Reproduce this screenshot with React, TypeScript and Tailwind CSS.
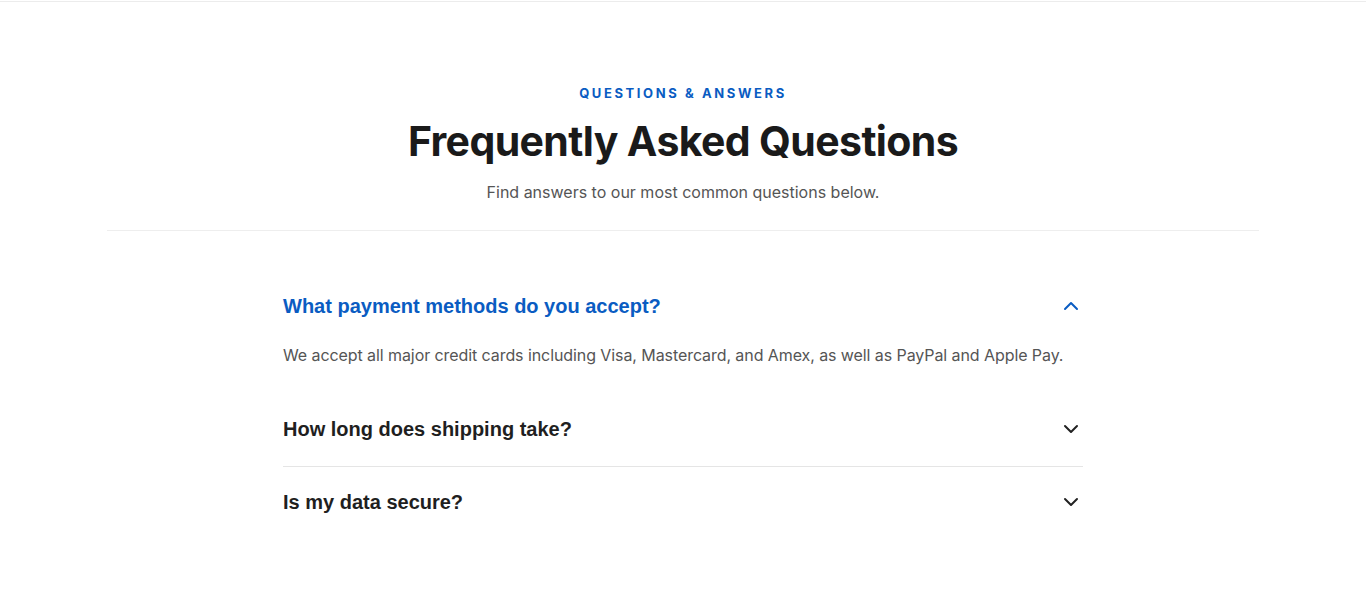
import React, { useState } from "react";
import { ChevronDown, ChevronUp } from "lucide-react";

const faqs = [
  {
    q: "What payment methods do you accept?",
    a: "We accept all major credit cards including Visa, Mastercard, and Amex, as well as PayPal and Apple Pay.",
    pad: "pt-[22px] pb-[22px]",
  },
  { q: "How long does shipping take?", a: "Standard shipping takes 3–5 business days.", pad: "pt-[22px] pb-[23px]" },
  { q: "Is my data secure?", a: "Yes, all data is encrypted in transit and at rest.", pad: "pt-[21px] pb-[22px]" },
];

export default function App() {
  const [open, setOpen] = useState(0);
  return (
    <div className="min-h-[598px] bg-white font-['Inter',sans-serif]">
      <div className="h-[2px] border-b border-[#ececec]" />
      <section className="mx-auto max-w-6xl pt-[81px]">
        <div className="flex flex-col items-center border-b border-[#eeeeee] pb-[26px] text-center">
          <p className="text-[13px] font-bold leading-5 tracking-[0.2em] text-[#0a5cc2]">
            QUESTIONS &amp; ANSWERS
          </p>
          <h1 className="mt-[12px] text-[41px] font-bold leading-[52px] tracking-[-0.015em] text-[#1a1a1a]">
            Frequently Asked Questions
          </h1>
          <p className="mt-[13px] text-base leading-6 text-[#555555]">
            Find answers to our most common questions below.
          </p>
        </div>
        <div className="mx-auto mt-[39px] max-w-[800px]">
          {faqs.map((f, i) => {
            const isOpen = open === i;
            return (
              <div key={i} className={i === 1 ? "border-b border-[#e5e5e5]" : ""}>
                <button
                  onClick={() => setOpen(isOpen ? -1 : i)}
                  className={`flex w-full items-center justify-between text-left ${f.pad}`}
                >
                  <span
                    className={`font-['Liberation_Sans',Arial,sans-serif] text-[20px] font-bold leading-7 ${
                      isOpen ? "text-[#0a5cc2]" : "text-[#1f1f1f]"
                    }`}
                  >
                    {f.q}
                  </span>
                  {isOpen ? (
                    <ChevronUp size={24} strokeWidth={2} className="text-[#0a5cc2]" />
                  ) : (
                    <ChevronDown size={24} strokeWidth={2} className="text-[#222222]" />
                  )}
                </button>
                {isOpen && (
                  <p className="mt-px pb-[26px] text-base leading-6 tracking-[-0.005em] text-[#555555]">{f.a}</p>
                )}
              </div>
            );
          })}
        </div>
      </section>
    </div>
  );
}
